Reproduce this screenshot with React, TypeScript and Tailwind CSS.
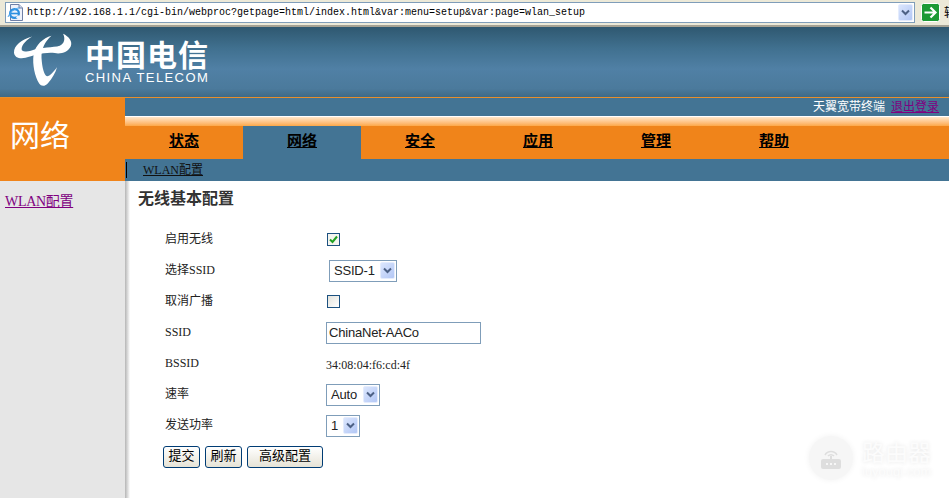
import React from 'react';

const TABS = ['状态', '网络', '安全', '应用', '管理', '帮助'];
const cjk = "font-['Liberation_Serif','Noto_Sans_CJK_SC',serif]";

const ComboArrow = () => (
  <span className="w-[15px] h-[17px] shrink-0 flex items-center justify-center bg-gradient-to-br from-[#dbe6fd] to-[#b3c7f5] rounded-[2px] border border-[#e4ecfd]">
    <svg width="9" height="7" viewBox="0 0 9 7">
      <path d="M1 1.5 L4.5 5 L8 1.5" fill="none" stroke="#4d6185" strokeWidth="2" />
    </svg>
  </span>
);

const FakeSelect = ({ value, w }: { value: string; w: string }) => (
  <div className={`${w} h-[22px] border border-[#7f9db9] bg-white flex items-center justify-between pl-[4px] pr-[1px] text-[13px] tracking-[-0.2px] text-[#222] font-['Liberation_Sans',sans-serif]`}>
    <span>{value}</span>
    <ComboArrow />
  </div>
);

const Row = ({ label, children }: { label: string; children: React.ReactNode }) => (
  <div className="flex items-center h-[31px]">
    <div className="w-[162px] text-[12px] text-[#222] -mt-[2px]">{label}</div>
    <div>{children}</div>
  </div>
);

const Btn = ({ label, w }: { label: string; w: string }) => (
  <button className={`${w} h-[22px] border border-[#003c74] rounded-[3px] bg-gradient-to-b from-white to-[#e6e3d6] text-[13px] text-black leading-none pb-[3px]`}>
    {label}
  </button>
);

const LogoMark = () => (
  <svg width="61" height="54" viewBox="24 20 184 162" className="shrink-0 mb-[4px]">
    <path
      d="M82 30 C50 38 26 58 27 78 C28 94 45 98 62 94 C85 88 120 76 150 80 C170 84 190 76 198 60 C205 45 192 30 175 22 C182 35 180 52 165 58 C145 64 110 62 80 72 C65 76 50 78 50 68 C50 55 65 40 82 30 Z"
      fill="#ffffff"
    />
    <path
      d="M140 28 C115 35 92 55 86 85 C82 115 90 150 103 172 C110 182 122 180 130 170 C142 157 152 140 157 122 C148 135 135 150 127 150 C118 148 112 125 110 95 C109 70 120 45 140 28 Z"
      fill="#ffffff"
    />
  </svg>
);

export default function App() {
  return (
    <div className={`relative w-[949px] h-[498px] overflow-hidden flex flex-col bg-white ${cjk}`}>
      {/* browser address bar */}
      <div className="h-[27px] shrink-0 bg-[#ece9d8] border-b-2 border-[#a5a294] flex items-center pl-[5px] overflow-hidden">
        <div className="w-[910px] shrink-0 h-[21px] bg-white border border-[#7f9db9] flex items-center pl-[1px] pr-[1px]">
          <svg width="17" height="17" viewBox="0 0 17 17" className="shrink-0">
            <path d="M3.5 0.5 H12 L15.5 4 V16.5 H3.5 Z" fill="#eef2fb" stroke="#6f80a6" />
            <path d="M12 0.5 V4 H15.5" fill="#cfd8ec" stroke="#6f80a6" />
            <circle cx="7.5" cy="9.5" r="4.4" fill="none" stroke="#2d8fe0" strokeWidth="2.2" />
            <path d="M3 9.5 H12" stroke="#2d8fe0" strokeWidth="1.6" />
            <path d="M10 11.5 H13 V14 H9 Z" fill="#eef2fb" />
            <path d="M1 13 C3 8 8 4 12.5 4" fill="none" stroke="#4aa6ee" strokeWidth="1" />
          </svg>
          <span className="ml-[3px] flex-1 text-[10px] text-black font-['Liberation_Mono',monospace] whitespace-nowrap">
            http://192.168.1.1/cgi-bin/webproc?getpage=html/index.html&amp;var:menu=setup&amp;var:page=wlan_setup
          </span>
          <ComboArrow />
        </div>
        <svg width="19" height="19" viewBox="0 0 19 19" className="ml-[6px] shrink-0">
          <rect x="0.5" y="0.5" width="18" height="18" rx="2" fill="#1d9a35" stroke="#fff" />
          <path d="M3.5 9.5 H14 M9.5 4.5 L14.5 9.5 L9.5 14.5" stroke="#fff" strokeWidth="2.2" fill="none" />
        </svg>
        <span className="ml-[4px] text-[12px] text-black whitespace-nowrap">转到</span>
      </div>

      {/* telecom banner */}
      <div className="h-[70px] shrink-0 bg-[linear-gradient(#2f5870_0%,#40708f_30%,#5080a5_60%,#4b7a9c_88%,#3f6a86_100%)] flex items-center pl-[13px]">
        <LogoMark />
        <div className="ml-[11px] mb-[2px] text-white flex flex-col items-center">
          <span className="text-[30px] leading-[33px] font-bold tracking-[1px] font-['Noto_Sans_CJK_SC',sans-serif]">中国电信</span>
          <span className="text-[13px] leading-[15px] font-['Liberation_Sans',sans-serif] tracking-[1.4px]">CHINA TELECOM</span>
        </div>
      </div>
      <div className="h-[1px] shrink-0 bg-[#e88f2c]" />

      {/* top section */}
      <div className="flex h-[83px] shrink-0">
        <div className="w-[125px] shrink-0 bg-[#f0841a] text-white text-[30px] leading-none pl-[10px] pt-[20px] font-['Noto_Sans_CJK_SC',sans-serif]">网络</div>
        <div className="flex-1 flex flex-col bg-[#437494]">
          <div className="h-[18px] flex items-center justify-end pr-[10px] text-[12px] text-white">
            <span>天翼宽带终端</span>
            <a href="#" className="ml-[6px] underline text-[#800080]">退出登录</a>
          </div>
          <div className="h-[10px] border-t border-white bg-gradient-to-b from-[#ffe6c9] to-[#fda846]" />
          <div className="h-[33px] flex bg-[#f0841a]">
            {TABS.map((t) => (
              <a
                key={t}
                href="#"
                className={`w-[118px] flex items-center justify-center pb-[2px] text-[15px] font-bold text-black underline ${t === '网络' ? 'bg-[#437494]' : ''}`}
              >
                {t}
              </a>
            ))}
          </div>
          <div className="h-[22px] flex items-center text-[12px]">
            <span className="w-[1px] h-[16px] bg-black ml-[1px]" />
            <a href="#" className="ml-[16px] text-[#111] underline">WLAN配置</a>
          </div>
        </div>
      </div>

      {/* body */}
      <div className="flex-1 flex min-h-0">
        <div className="w-[125px] shrink-0 bg-[#e6e6e6] pl-[5px] pt-[10px] text-[14px] tracking-[-0.3px]">
          <a href="#" className="underline text-[#800080]">WLAN配置</a>
        </div>
        <div className="w-[5px] shrink-0 bg-gradient-to-r from-[#b5b5b5] to-white" />
        <div className="flex-1 text-[#222]">
          <h1 className="pl-[8px] pt-[8px] text-[16px] leading-[20px] font-bold text-[#333]">无线基本配置</h1>
          <div className="pl-[35px] pt-[15px]">
            <Row label="启用无线">
              <div className="-mt-[1px] w-[13px] h-[13px] border border-[#1c5180] bg-[#f4f4ee] flex items-center justify-center">
                <svg width="9" height="9" viewBox="0 0 9 9">
                  <path d="M1 4.5 L3.5 7 L8 1.5" stroke="#21a121" strokeWidth="2" fill="none" />
                </svg>
              </div>
            </Row>
            <Row label="选择SSID">
              <div className="ml-[2px]"><FakeSelect value="SSID-1" w="w-[68px]" /></div>
            </Row>
            <Row label="取消广播">
              <div className="-mt-[1px] w-[13px] h-[13px] border border-[#1c5180] bg-gradient-to-br from-[#e4e3dc] to-white" />
            </Row>
            <Row label="SSID">
              <div className="-ml-[1px] w-[155px] h-[22px] border border-[#7f9db9] bg-white text-[13px] tracking-[-0.2px] leading-[20px] pl-[2px] text-[#222] font-['Liberation_Sans',sans-serif]">ChinaNet-AACo</div>
            </Row>
            <Row label="BSSID">
              <span className="text-[12px] -ml-[1px]">34:08:04:f6:cd:4f</span>
            </Row>
            <Row label="速率">
              <div className="-ml-[1px]"><FakeSelect value="Auto" w="w-[54px]" /></div>
            </Row>
            <Row label="发送功率">
              <div className="-ml-[1px]"><FakeSelect value="1" w="w-[34px]" /></div>
            </Row>
          </div>
          <div className="flex gap-[5px] pl-[33px] pt-[5px]">
            <Btn label="提交" w="w-[37px]" />
            <Btn label="刷新" w="w-[37px]" />
            <Btn label="高级配置" w="w-[76px]" />
          </div>
        </div>
      </div>

      {/* watermark */}
      <div className="absolute left-[809px] top-[436px] flex items-center">
        <div className="w-[44px] h-[44px] rounded-full bg-[#f6f6f6] shadow-[0_0_6px_rgba(0,0,0,0.06)] flex items-center justify-center">
          <svg width="26" height="26" viewBox="0 0 26 26" fill="none">
            <path d="M7 10 A7 7 0 0 1 19 10" stroke="#dedede" strokeWidth="1.5" />
            <path d="M10 11 A4 4 0 0 1 16 11" stroke="#dedede" strokeWidth="1.5" />
            <path d="M12 11 H14 V15 H12 Z" fill="#dedede" />
            <rect x="3" y="14" width="20" height="10" rx="2" fill="#dedede" />
            <circle cx="9" cy="19" r="1" fill="#fff" />
            <circle cx="13" cy="19" r="1" fill="#fff" />
            <circle cx="17" cy="19" r="1" fill="#fff" />
          </svg>
        </div>
        <div className="ml-[9px] flex flex-col text-[#fcfcfc] [text-shadow:0_0_4px_rgba(0,0,0,0.1)] font-['Noto_Sans_CJK_SC',sans-serif]">
          <span className="text-[23px] leading-[28px]">路由器</span>
          <span className="text-[13px] leading-[14px] font-['Liberation_Sans',sans-serif]">luyouqi.com</span>
        </div>
      </div>
    </div>
  );
}
